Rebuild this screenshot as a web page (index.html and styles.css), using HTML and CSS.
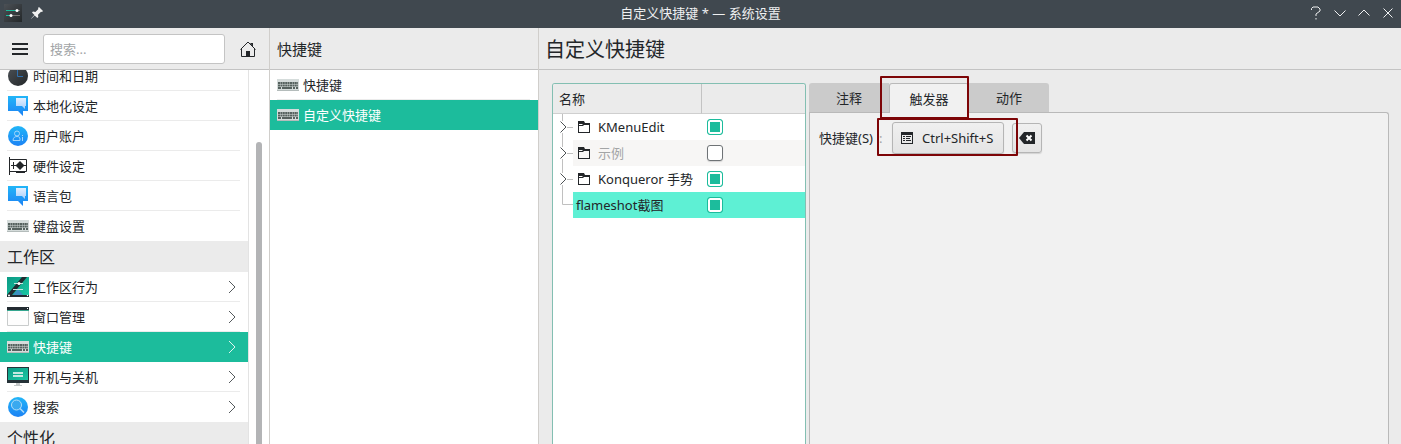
FILE: index.html
```
<!DOCTYPE html>
<html lang="zh-CN">
<head>
<meta charset="utf-8">
<title>自定义快捷键 * — 系统设置</title>
<link rel="stylesheet" href="styles.css">
</head>
<body>
<svg class="defs" aria-hidden="true">
  <defs>
    <linearGradient id="blue" x1="0" y1="0" x2="0" y2="1"><stop offset="0" stop-color="#22b6f8"/><stop offset="1" stop-color="#1c82f4"/></linearGradient>
    <linearGradient id="pale" x1="0" y1="0" x2="0" y2="1"><stop offset="0" stop-color="#e4efff"/><stop offset="1" stop-color="#a9d0fb"/></linearGradient>
    <linearGradient id="green" x1="0" y1="0" x2="1" y2="1"><stop offset="0" stop-color="#0b9a84"/><stop offset="1" stop-color="#1cc9a5"/></linearGradient>
    <linearGradient id="dark" x1="0" y1="0" x2="1" y2="1"><stop offset="0" stop-color="#4c5156"/><stop offset="1" stop-color="#232729"/></linearGradient>
    <symbol id="keyboard" viewBox="0 0 22 22">
      <path fill="#d5dcdb" d="M0 5h22v12H0z"/><path fill="#b4bcbb" d="M0 16h22v1H0z"/>
      <path stroke="#56625f" stroke-width="2" stroke-dasharray="2 .4" d="M1 9h20M1 11.500h20"/>
      <path stroke="#56625f" stroke-width="2" d="M1 14h3M5 14h10M16 14h2M19 14h2"/>
    </symbol>
    <symbol id="chat" viewBox="0 0 22 22">
      <path fill="url(#blue)" d="M1 1h20v15h-5v5l-5-5H1z"/><path fill="url(#pale)" d="M9 3h10v8h-1v3l-3-3H9z"/>
    </symbol>
    <symbol id="chevron" viewBox="0 0 8 14"><path fill="none" stroke="currentColor" d="M1 1l6 6-6 6"/></symbol>
    <symbol id="folder" viewBox="0 0 12 12"><path fill="#232629" fill-rule="evenodd" d="M0 0h6l1 2h5v10H0zM1 5v6h10V4H6L5 5zM1 3v1h3l1-1z"/></symbol>
  </defs>
</svg>

<header class="titlebar">
  <div class="title-icons">
    <svg width="18" height="18" viewBox="0 0 18 18"><path fill="url(#dark)" d="M0 0h18v18H0z"/><path stroke="#1abc9c" d="M2 6.500h11"/><path stroke="#777" d="M13 6.500h3M7 11.500h9"/><path stroke="#1abc9c" d="M2 11.500h5"/><circle cx="13" cy="6.500" r="1.500" fill="#fff"/><circle cx="7" cy="11.500" r="1.500" fill="#fff"/></svg>
    <svg width="12" height="12" viewBox="0 0 12 12"><path fill="#f0f0f0" d="M8 0l4 4-1 1-1-.3-3 3 .3 2.300-1 1-2.600-2.600L.6 11.600 0 12l.4-.7 3-3.200L1 5.600l1-1 2.400.3 3-3L7 1z"/></svg>
  </div>
  <h1 class="window-title">自定义快捷键 * — 系统设置</h1>
  <div class="window-controls">
    <button aria-label="帮助"><svg width="12" height="14" viewBox="0 0 12 14"><path d="M1.500 4V2.500L3 1h5l2 2v2L6 8v2M6 12v1.500"/></svg></button>
    <button aria-label="最小化"><svg width="12" height="14" viewBox="0 0 12 14"><path d="M.5 4.500L6 10l5.500-5.500"/></svg></button>
    <button aria-label="最大化"><svg width="12" height="14" viewBox="0 0 12 14"><path d="M.5 9.500L6 4l5.500 5.500"/></svg></button>
    <button aria-label="关闭"><svg width="12" height="14" viewBox="0 0 12 14"><path d="M1.500 2.500l9 9M10.500 2.500l-9 9"/></svg></button>
  </div>
</header>

<div class="window">
  <aside class="sidebar">
    <div class="toolbar side-tools">
      <button class="plain" aria-label="菜单"><svg width="16" height="12" viewBox="0 0 16 12"><path fill="#232629" d="M0 0h16v2H0zM0 5h16v2H0zM0 10h16v2H0z"/></svg></button>
      <input class="search" type="text" placeholder="搜索..." aria-label="搜索">
      <button class="plain" aria-label="主页"><svg width="16" height="16" viewBox="0 0 16 16"><path fill="none" stroke="#232629" d="M.5 8.500L8 1l7.500 7.500M1.500 7.500v8h13v-8"/><path fill="#232629" d="M6 10h4v6H6zM10 2h3v4z"/></svg></button>
    </div>
    <div class="side-scroll">
      <nav class="side-list">
        <a class="item" href="#"><svg class="icon" viewBox="0 0 22 22"><circle cx="11" cy="11" r="10" fill="url(#dark)"/><path fill="none" stroke="#2f6fae" d="M10.500 3v8.500H16"/></svg>时间和日期</a>
        <a class="item" href="#"><svg class="icon"><use href="#chat"/></svg>本地化设定</a>
        <a class="item" href="#"><svg class="icon" viewBox="0 0 22 22"><circle cx="11" cy="11" r="10" fill="url(#blue)"/><path fill="none" stroke="#a5d6fb" d="M6 15.500c0-3 2-4 4-4s3 1 3 2.500v1.500zM15.500 12v4M15.500 10v1"/><circle cx="10" cy="8.500" r="2.500" fill="none" stroke="#a5d6fb"/></svg>用户账户</a>
        <a class="item" href="#"><svg class="icon" viewBox="0 0 22 22"><path fill="none" stroke="#232629" d="M2.500 2v18M2 4.500h17.500v12H2"/><path fill="#232629" d="M9 17h9v1H9zM4 10h5l4-4 4 4h2v1h-2l-4 4-4-4H4zM6 7h1v7H6z"/></svg>硬件设定</a>
        <a class="item" href="#"><svg class="icon"><use href="#chat"/></svg>语言包</a>
        <a class="item last" href="#"><svg class="icon"><use href="#keyboard"/></svg>键盘设置</a>
        <h2 class="group">工作区</h2>
        <a class="item" href="#"><svg class="icon" viewBox="0 0 22 22"><path fill="url(#green)" d="M0 1h22v20H0z"/><path fill="#3c8fc0" d="M6 19l5-6 5 6z"/><path fill="#232b31" d="M15 1h5L5 19h17v2H0v-2z"/><path stroke="#c4e6e0" d="M7 7.500h9M6 13.500h10"/><circle cx="12" cy="7.500" r="1.500" fill="#fff"/><circle cx="2" cy="19.500" r="1" fill="#fff"/><circle cx="20.500" cy="19.500" r=".7" fill="#fff"/></svg>工作区行为<svg class="arrow"><use href="#chevron"/></svg></a>
        <a class="item" href="#"><svg class="icon" viewBox="0 0 22 22"><path fill="#fdfdfd" stroke="#c9cccc" d="M.5 2.500h21v17H.5z"/><path fill="#232b31" d="M0 1h22v3H0z"/><path fill="#35a68f" d="M0 4h22v1H0z"/><path fill="#fff" d="M20 2h1v1h-1z"/></svg>窗口管理<svg class="arrow"><use href="#chevron"/></svg></a>
        <a class="item selected" href="#"><svg class="icon"><use href="#keyboard"/></svg>快捷键<svg class="arrow"><use href="#chevron"/></svg></a>
        <a class="item" href="#"><svg class="icon" viewBox="0 0 22 22"><path fill="#263238" d="M0 1h22v16H0z"/><path fill="url(#green)" d="M1 2h20v12H1z"/><path fill="#c5e9e1" d="M6 6h10v2H6zM6 9h10v2H6z"/><path fill="#c3c7c8" d="M9 17h4v2h2v1H7v-1h2z"/></svg>开机与关机<svg class="arrow"><use href="#chevron"/></svg></a>
        <a class="item last" href="#"><svg class="icon" viewBox="0 0 22 22"><circle cx="11" cy="11" r="10" fill="url(#blue)"/><circle cx="9.500" cy="9" r="5" fill="#3aa9ef" stroke="#b4def8"/><path stroke="#b4def8" stroke-width="1.500" d="M13 12.500l4 4"/></svg>搜索<svg class="arrow"><use href="#chevron"/></svg></a>
        <h2 class="group">个性化</h2>
      </nav>
      <div class="scroll-track"><div class="scroll-thumb"></div></div>
    </div>
  </aside>

  <section class="subnav">
    <div class="toolbar"><h2 class="subnav-title">快捷键</h2></div>
    <nav class="sub-list">
      <a class="item" href="#"><svg class="icon"><use href="#keyboard"/></svg>快捷键</a>
      <a class="item selected" href="#"><svg class="icon"><use href="#keyboard"/></svg>自定义快捷键</a>
    </nav>
  </section>

  <main class="main">
    <div class="toolbar"><h2 class="page-title">自定义快捷键</h2></div>
    <div class="content">
      <div class="tree-frame">
        <table class="tree">
          <colgroup><col class="col-branch"><col class="col-name"><col></colgroup>
          <thead><tr><th colspan="2">名称</th><th></th></tr></thead>
          <tbody>
            <tr>
              <td><svg class="branch" viewBox="0 0 20 26"><path class="line" d="M9.500 0v7M9.500 19v7M14 13.500h6"/><path class="fold" d="M7.500 7.500l5.500 5.500-5.500 5.500"/></svg></td>
              <td><label class="name" for="c1"><svg class="folder"><use href="#folder"/></svg>KMenuEdit</label></td>
              <td><input type="checkbox" id="c1" checked></td>
            </tr>
            <tr class="alt">
              <td><svg class="branch" viewBox="0 0 20 26"><path class="line" d="M9.500 0v7M9.500 19v7M14 13.500h6"/><path class="fold" d="M7.500 7.500l5.500 5.500-5.500 5.500"/></svg></td>
              <td><label class="name" for="c2"><svg class="folder"><use href="#folder"/></svg>示例</label></td>
              <td><input type="checkbox" id="c2"></td>
            </tr>
            <tr>
              <td><svg class="branch" viewBox="0 0 20 26"><path class="line" d="M9.500 0v7M9.500 19v7M14 13.500h6"/><path class="fold" d="M7.500 7.500l5.500 5.500-5.500 5.500"/></svg></td>
              <td><label class="name" for="c3"><svg class="folder"><use href="#folder"/></svg>Konqueror 手势</label></td>
              <td><input type="checkbox" id="c3" checked></td>
            </tr>
            <tr class="current">
              <td><svg class="branch" viewBox="0 0 20 26"><path class="line" d="M9.500 0v12.500H20"/></svg></td>
              <td><label class="leaf" for="c4">flameshot截图</label></td>
              <td><input type="checkbox" id="c4" checked></td>
            </tr>
          </tbody>
        </table>
      </div>
      <div class="tabs">
        <div class="tab-row" role="tablist">
          <button class="tab" role="tab">注释</button>
          <button class="tab active" role="tab" aria-selected="true">触发器<span class="mark mark-tab"></span></button>
          <button class="tab" role="tab">动作</button>
        </div>
        <div class="pane" role="tabpanel">
          <div class="field">
            <label class="field-label" for="shortcut"><span>快捷键(S)</span><span class="colon">:</span></label>
            <div class="shortcut-wrap">
              <button class="push shortcut" id="shortcut"><svg width="12" height="12" viewBox="0 0 12 12"><path fill="#232629" fill-rule="evenodd" d="M0 0h12v12H0zM1 3v8h10V3zM2 4h2v1H2zM2 6h2v1H2zM2 8h2v1H2zM5 4h5v1H5zM5 6h4v1H5zM5 8h5v1H5z"/></svg>Ctrl+Shift+S</button>
              <span class="mark mark-key"></span>
            </div>
            <button class="push clear" aria-label="清除"><svg width="16" height="12" viewBox="0 0 16 12"><path fill="#232629" d="M0 6l5-6h11v12H5z"/><path stroke="#fff" stroke-width="2" d="M7.500 3.500l5 5M12.500 3.500l-5 5"/></svg></button>
          </div>
        </div>
      </div>
    </div>
  </main>
</div>
</body>
</html>
```
FILE: styles.css
```
* { box-sizing: border-box; }
body {
  margin: 0;
  height: 100vh;
  display: flex;
  flex-direction: column;
  overflow: hidden;
  background: #ebebeb;
  color: #232629;
  font: 13px/20px "Noto Sans", "Noto Sans CJK SC", sans-serif;
}
button, input { font: inherit; color: inherit; }
button { padding: 0; border: 0; background: none; }
h1, h2 { margin: 0; font-weight: 400; }
svg { display: block; flex: none; }
.defs { position: absolute; width: 0; height: 0; }

.titlebar {
  flex: none;
  height: 28px;
  display: grid;
  grid-template-columns: 1fr auto 1fr;
  align-items: center;
  background: #40484f;
  color: #eff0f1;
}
.title-icons { display: flex; align-items: center; gap: 9px; padding-left: 4px; }
.title-icons, .window-controls { padding-bottom: 2px; }
.window-title { padding-bottom: 2px; font-size: 13px; line-height: 20px; }
.window-controls { display: flex; justify-content: flex-end; gap: 12px; padding-right: 7px; }
.window-controls path { fill: none; stroke: #eff0f1; }

.window { flex: 1; min-height: 0; display: flex; }
.toolbar {
  flex: none;
  height: 42px;
  display: flex;
  align-items: center;
  border-bottom: 1px solid #c3c3c3;
}
.sidebar, .subnav {
  flex: none;
  display: flex;
  flex-direction: column;
  border-right: 1px solid #d0cecb;
}
.sidebar { width: 270px; }
.subnav { width: 269px; }
.side-tools { gap: 15px; padding: 0 13px 0 12px; }
.search {
  flex: 1;
  min-width: 0;
  height: 30px;
  padding: 0 6px;
  border: 1px solid #c4c4c4;
  border-radius: 3px;
  background: #fff;
}
.search::placeholder { color: #a2a5a7; opacity: 1; }

.side-scroll { flex: 1; min-height: 0; display: flex; overflow: hidden; background: #fff; }
.side-list { flex: 1; margin-top: -9px; border-right: 1px solid #e3e3e3; }
.item {
  position: relative;
  display: flex;
  align-items: center;
  gap: 4px;
  height: 30px;
  padding: 0 12px 0 7px;
  color: inherit;
  text-decoration: none;
}
.item::after {
  content: "";
  position: absolute;
  left: 7px;
  right: 8px;
  bottom: 0;
  border-bottom: 1px solid #ebebeb;
}
.item.last::after, .item.selected::after { display: none; }
.item.selected { background: #1cbc9c; color: #fff; }
.icon { width: 22px; height: 22px; }
.arrow { width: 8px; height: 14px; margin-left: auto; color: #555a5d; }
.selected .arrow { color: #e0f5f0; }
.group { height: 31px; padding: 0 7px; background: #ebebeb; font-size: 16px; line-height: 32px; }
.scroll-track { width: 20px; padding: 72px 7px 0; }
.scroll-thumb { height: 100%; border-radius: 3px 3px 0 0; background: #b3b4b6; }

.subnav-title { padding: 1px 7px 0; font-size: 15px; line-height: 24px; }
.sub-list { flex: 1; background: #fff; }

.main { flex: 1; min-width: 0; display: flex; flex-direction: column; }
.page-title { padding: 2px 6px 0; font-size: 20px; line-height: 28px; }
.content { flex: 1; min-height: 0; display: flex; gap: 3px; padding: 13px 12px 0 13px; }
.tree-frame {
  flex: none;
  width: 254px;
  border: 1px solid #83bfb2;
  border-bottom: 0;
  border-radius: 3px 3px 0 0;
  background: #fff;
  overflow: hidden;
}
.tree { width: 100%; table-layout: fixed; border-collapse: separate; border-spacing: 0; }
.col-branch { width: 20px; }
.col-name { width: 129px; }
.tree th {
  height: 30px;
  padding: 0 6px;
  background: #ebebeb;
  border-bottom: 1px solid #cfcfcf;
  font-weight: 400;
  text-align: left;
}
.tree th:first-child { border-right: 1px solid #c3c3c3; }
.tree td { height: 26px; padding: 0; vertical-align: middle; }
.alt td + td { background: #f7f6f5; }
.current td + td { background: #5ef0d4; }
.alt .name { color: #a3a5a6; }
.branch { width: 20px; height: 26px; }
.line { fill: none; stroke: #c0c0c0; }
.fold { fill: none; stroke: #4d5154; }
.name { display: flex; align-items: center; gap: 8px; padding-left: 5px; white-space: nowrap; }
.folder { width: 12px; height: 12px; }
.leaf { display: block; padding-left: 3px; }
.tree input {
  appearance: none;
  display: block;
  width: 16px;
  height: 16px;
  margin: 0 0 0 5px;
  border: 1px solid #6f7376;
  border-radius: 3px;
  background: #fff;
  box-shadow: 0 1px 1px #d5d5d5;
}
.tree input:checked {
  border-color: #1cbc9c;
  background: #1cbc9c;
  box-shadow: inset 0 0 0 2px #fff;
}

.tabs { flex: 1; min-width: 0; display: flex; flex-direction: column; }
.tab-row { flex: none; display: flex; height: 29px; }
.tab { position: relative; width: 80px; height: 29px; background: #cbcbcb; }
.tab:first-child { border-top-left-radius: 3px; }
.tab:last-child { border-top-right-radius: 3px; }
.tab.active {
  z-index: 1;
  height: 30px;
  border: 1px solid #b9b9b9;
  border-bottom: 0;
  border-radius: 3px 3px 0 0;
  background: #f1f1f1;
}
.pane {
  flex: 1;
  padding: 9px;
  border: 1px solid #b9b9b9;
  border-bottom: 0;
  border-radius: 0 3px 0 0;
  background: #f1f1f1;
}
.field { display: flex; align-items: center; }
.field-label { display: flex; gap: 6px; width: 73px; white-space: nowrap; }
.colon { color: #a3a5a6; }
.shortcut-wrap { position: relative; margin-right: 8px; }
.push {
  display: flex;
  align-items: center;
  justify-content: center;
  border: 1px solid #b5b5b5;
  border-radius: 3px;
  background: linear-gradient(#f0f0f0, #e4e4e4);
  box-shadow: 0 1px 1px #d2d2d2;
}
.shortcut { gap: 9px; height: 32px; padding: 0 10px 0 8px; }
.clear { width: 30px; height: 30px; }
.mark { position: absolute; border: 2px solid #7d0507; border-radius: 1px; pointer-events: none; }
.mark-tab { inset: -8px -1px -6px -10px; }
.mark-key { inset: -4px -14px -2px -15px; }
```
